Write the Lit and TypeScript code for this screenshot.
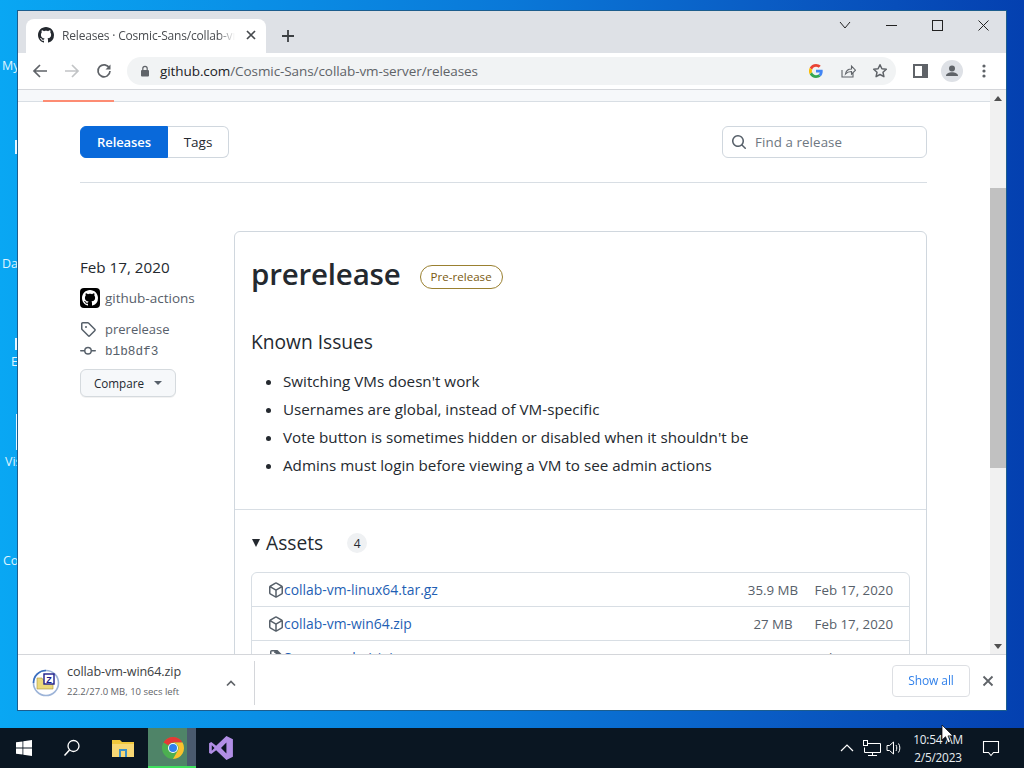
import { LitElement, html, css } from "lit";
import { customElement } from "lit/decorators.js";

const GH = "M8 0C3.58 0 0 3.58 0 8c0 3.54 2.29 6.53 5.47 7.59.4.07.55-.17.55-.38 0-.19-.01-.82-.01-1.49-2.01.37-2.53-.49-2.69-.94-.09-.23-.48-.94-.82-1.13-.28-.15-.68-.52-.01-.53.63-.01 1.08.58 1.23.82.72 1.21 1.87.87 2.33.66.07-.52.28-.87.51-1.07-1.78-.2-3.64-.89-3.64-3.95 0-.87.31-1.59.82-2.15-.08-.2-.36-1.02.08-2.12 0 0 .67-.21 2.2.82.64-.18 1.32-.27 2-.27.68 0 1.36.09 2 .27 1.53-1.04 2.2-.82 2.2-.82.44 1.1.16 1.92.08 2.12.51.56.82 1.27.82 2.15 0 3.07-1.87 3.75-3.65 3.95.29.25.54.73.54 1.48 0 1.07-.01 1.93-.01 2.2 0 .21.15.46.55.38A8.013 8.013 0 0016 8c0-4.42-3.58-8-8-8z";
const TAG = "M2.5 7.775V2.75a.25.25 0 01.25-.25h5.025a.25.25 0 01.177.073l6.25 6.25a.25.25 0 010 .354l-5.025 5.025a.25.25 0 01-.354 0l-6.25-6.25a.25.25 0 01-.073-.177zm-1.5 0V2.75C1 1.784 1.784 1 2.75 1h5.025c.464 0 .91.184 1.238.513l6.25 6.25a1.75 1.75 0 010 2.474l-5.026 5.026a1.75 1.75 0 01-2.474 0l-6.25-6.25A1.75 1.75 0 011 7.775zM6 5a1 1 0 100 2 1 1 0 000-2z";
const COMMIT = "M10.5 7.75a2.5 2.5 0 11-5 0 2.5 2.5 0 015 0zm1.43.75a4.002 4.002 0 01-7.86 0H.75a.75.75 0 110-1.5h3.32a4.001 4.001 0 017.86 0h3.32a.75.75 0 110 1.5h-3.32z";
const PKG = "M8.878.392a1.75 1.75 0 00-1.756 0l-5.25 3.045A1.75 1.75 0 001 4.951v6.098c0 .624.332 1.2.872 1.514l5.25 3.045a1.75 1.75 0 001.756 0l5.25-3.045c.54-.313.872-.89.872-1.514V4.951c0-.624-.332-1.2-.872-1.514L8.878.392zM7.875 1.69a.25.25 0 01.25 0l4.63 2.685L8 7.133 3.245 4.375l4.63-2.685zM2.5 5.677v5.372c0 .09.047.171.125.216l4.625 2.683V8.432L2.5 5.677zm6.25 8.271l4.625-2.683a.25.25 0 00.125-.216V5.677L8.75 8.432v5.516z";
const ZIPF = "M3.5 1.75a.25.25 0 01.25-.25h3a.75.75 0 000 1.5h.5a.25.25 0 01.25.25v.5c0 .41.34.75.75.75h4a.25.25 0 01.25.25v10a.25.25 0 01-.25.25h-8.5a.25.25 0 01-.25-.25V1.75zM3.75 0A1.75 1.75 0 002 1.75v12.5c0 .97.78 1.75 1.75 1.75h8.5A1.75 1.75 0 0014 14.25V4.5L9.5 0H3.75z";
const SEARCH = "M11.5 7a4.499 4.499 0 11-8.998 0A4.499 4.499 0 0111.5 7zm-.82 4.74a6 6 0 111.06-1.06l3.04 3.04a.75.75 0 11-1.06 1.06l-3.04-3.04z";

const oct = (d: string, size: number, cls = "") =>
  html`<svg class=${cls} width=${size} height=${size} viewBox="0 0 16 16" fill="currentColor" aria-hidden="true"><path fill-rule="evenodd" d=${d}></path></svg>`;

const chromeLogo = (size: number) => html`<svg width=${size} height=${size} viewBox="0 0 48 48">
  <circle cx="24" cy="24" r="22" fill="#4caf50"/>
  <path d="M24 2a22 22 0 0 1 19.05 11H24a11 11 0 0 0-9.53 5.5L5 13A22 22 0 0 1 24 2z" fill="#e53935"/>
  <path d="M43.05 13A22 22 0 0 1 24 46l9.53-16.5A11 11 0 0 0 33.53 18.5 11 11 0 0 0 24 13z" fill="#fbc02d"/>
  <circle cx="24" cy="24" r="10" fill="#fff"/><circle cx="24" cy="24" r="8" fill="#2f80ed"/>
</svg>`;

@customElement("app-root")
export class AppRoot extends LitElement {
  static styles = css`
    :host { display: block; width: 1024px; height: 768px; }
    * { box-sizing: border-box; }
    .desk { position: relative; width: 1024px; height: 768px; overflow: hidden; display: flex; flex-direction: column; justify-content: flex-end;
      background: linear-gradient(90deg, #09a7f3 0%, #0a8fe6 25%, #0a78d8 50%, #0a5cc4 75%, #0440b0 100%); font-family: "Open Sans", sans-serif; }
    .dicon { position: absolute; left: 2px; color: #dff4ff; font-size: 12.5px; line-height: 14px; white-space: nowrap; }
    .dbar { position: absolute; left: 15px; width: 3px; background: #e8f6ff; }

    .win { position: absolute; left: 17px; top: 10px; width: 990px; height: 701px; border: 1px solid #1c5d8e; background: #fff; display: flex; flex-direction: column; overflow: hidden; }
    .tabstrip { height: 42px; flex: none; background: #dee1e6; display: flex; align-items: flex-end; padding-left: 8px; position: relative; }
    .tab { width: 240px; height: 34px; background: #fff; border-radius: 8px 8px 0 0; display: flex; align-items: center; padding: 0 7px 2px 12px; gap: 8px; }
    .tab .title { font-size: 12px; color: #4a4d51; white-space: nowrap; overflow: hidden; flex: 1; letter-spacing: -.18px; -webkit-mask-image: linear-gradient(90deg, #000 90%, transparent); mask-image: linear-gradient(90deg, #000 90%, transparent); }
    .newtab { margin: 0 0 9px 14px; width: 16px; height: 16px; color: #3c4043; display: flex; }
    .wctl { position: absolute; right: 0; top: 0; height: 28px; display: flex; align-items: center; color: #222; }
    .wctl span { width: 46px; display: flex; justify-content: center; }

    .toolbar { height: 37px; flex: none; background: #fff; border-bottom: 1px solid #d4d6da; display: flex; align-items: center; }
    .nav { width: 32px; display: flex; justify-content: center; color: #5f6368; }
    .nav.first { margin-left: 6px; }
    .omni { margin-left: 7px; width: 769px; height: 28px; background: #f1f3f4; border-radius: 14px; display: flex; align-items: center; padding: 0 0 0 12px; }
    .url { margin-left: 9px; font-size: 13.5px; color: #5f6368; white-space: nowrap; letter-spacing: -.08px; flex: 1; }
    .url b { font-weight: 400; color: #202124; }
    .omni-ic { width: 32px; display: flex; justify-content: center; color: #5f6368; }
    .tb-r { display: flex; align-items: center; color: #5f6368; }
    .tb-r .a { width: 32px; display: flex; justify-content: center; }

    .content { flex: 1; min-height: 0; display: flex; position: relative; }
    .page { flex: 1; min-width: 0; overflow: hidden; background: #fff; }
    .ghnav { height: 12px; background: #f6f8fa; border-bottom: 1px solid #d8dee4; padding-left: 25px; display: flex; align-items: flex-end; }
    .ghnav i { display: block; width: 71px; height: 2px; margin-bottom: -1px; background: #fd8c73; }
    .inner { padding: 24px 63px 0 62px; color: #24292f; }
    .head { display: flex; justify-content: space-between; padding-bottom: 24px; border-bottom: 1px solid #d8dee4; }
    .seg { display: flex; height: 32px; font-size: 13.5px; }
    .seg a { display: flex; align-items: center; justify-content: center; font-weight: 600; border: 1px solid #d0d7de; }
    .seg .on { width: 88px; background: #0969da; border-color: #0969da; color: #fff; border-radius: 6px 0 0 6px; font-size: 13px; letter-spacing: -.1px; }
    .seg .off { width: 61px; border-left: 0; color: #24292f; border-radius: 0 6px 6px 0; font-weight: 500; }
    .find { width: 205px; height: 32px; border: 1px solid #d0d7de; border-radius: 6px; display: flex; align-items: center; gap: 8px; padding-left: 8px; color: #57606a; font-size: 13.3px; }
    .find span { color: #6e7781; letter-spacing: .1px; }

    .rel { display: flex; padding-top: 48px; }
    .side { width: 154px; flex: none; display: flex; flex-direction: column; align-items: flex-start; color: #57606a; font-size: 13.5px; }
    .date { font-size: 15.2px; color: #24292f; line-height: 20px; margin-top: 26px; }
    .who { display: flex; align-items: center; gap: 5px; margin-top: 11px; height: 20px; color: #57606a; }
    .avatar { width: 20px; height: 20px; background: #000; border-radius: 4px; color: #fff; display: flex; align-items: center; justify-content: center; }
    .meta { display: flex; align-items: center; gap: 9px; height: 20px; font-size: 13px; }
    .meta.t { margin-top: 11px; }
    .meta.c { margin-top: 2px; font-family: "Liberation Mono", monospace; font-size: 12.7px; }
    .compare { margin-top: 8px; width: 96px; height: 28px; border: 1px solid #d5dade; border-radius: 6px; background: #f6f8fa; box-shadow: 0 1px 0 rgba(27,31,36,.06); display: flex; align-items: center; justify-content: center; gap: 10px; font-size: 11.7px; font-weight: 500; color: #24292f; }
    .caret { width: 0; height: 0; border: 4px solid transparent; border-top-color: #57606a; border-bottom: 0; }

    .box { flex: 1; min-width: 0; border: 1px solid #d0d7de; border-radius: 6px 6px 0 0; height: 440px; }
    .body { padding: 15px 16px 0 16px; height: 278px; border-bottom: 1px solid #d8dee4; }
    .titlerow { display: flex; align-items: center; gap: 20px; height: 54px; }
    h1 { margin: 0; font-size: 29.5px; font-weight: 600; color: #24292f; line-height: 54px; letter-spacing: -.2px; }
    .pill { height: 24px; border: 1px solid #9a8030; border-radius: 12px; padding: 0 10px; display: flex; align-items: center; font-size: 11.6px; font-weight: 500; color: #7a5a10; margin-top: 5px; margin-left: -1px; }
    h2 { margin: 26px 0 0; font-size: 19.2px; font-weight: 500; line-height: 30px; color: #24292f; }
    ul { margin: 10px 0 0; padding-left: 32px; font-size: 15.2px; line-height: 28px; color: #24292f; }
    .assets { padding: 16px 16px 0; }
    .ahead { display: flex; align-items: center; height: 32px; }
    .tri { width: 0; height: 0; border: 4px solid transparent; border-top: 8px solid #24292f; border-bottom: 0; margin: 2px 6px 0 1px; }
    .ahead b { font-size: 19.2px; font-weight: 500; color: #24292f; }
    .count { margin-left: 24px; width: 20px; height: 20px; border-radius: 50%; background: #eff1f3; font-size: 12px; display: flex; align-items: center; justify-content: center; margin-top: 2px; }
    .tbl { margin-top: 14px; border: 1px solid #d8dee4; border-radius: 6px 6px 0 0; font-size: 13.3px; }
    .row { height: 34px; display: flex; align-items: center; padding: 0 16px; border-top: 1px solid #d8dee4; color: #57606a; }
    .row:first-child { border-top: 0; height: 33px; }
    .row svg { flex: none; }
    .row a { color: #1f5fb4; font-size: 13.9px; font-weight: 500; flex: 1; }
    .row .sz { width: 52px; text-align: center; white-space: nowrap; }
    .row .dt { width: 94px; text-align: right; }

    .sb { width: 16px; flex: none; background: #f1f1f1; display: flex; flex-direction: column; align-items: center; position: relative; }
    .sb .up, .sb .dn { position: absolute; left: 4px; width: 0; height: 0; border: 4px solid transparent; }
    .sb .up { top: 6px; border-bottom: 5px solid #505050; border-top: 0; }
    .sb .dn { bottom: 5px; border-top: 5px solid #505050; border-bottom: 0; }
    .sb .thumb { position: absolute; top: 98px; left: 0; width: 16px; height: 280px; background: #c1c1c1; }

    .dl { height: 56px; flex: none; background: #fff; border-top: 1px solid #d4d6da; display: flex; align-items: center; position: relative; }
    .dlicon { margin-left: 14px; width: 28px; height: 28px; }
    .dltext { margin-left: 7px; width: 150px; display: flex; flex-direction: column; color: #3c4043; }
    .dltext .n { font-size: 12.6px; line-height: 16px; letter-spacing: -.1px; margin-bottom: 5px; margin-top: -4px; }
    .dltext .s { font-size: 9.5px; line-height: 13px; color: #5f6368; }
    .chev { color: #5f6368; margin-left: 8px; display: flex; }
    .vsep { margin-left: 17px; width: 1px; height: 44px; background: #d4d6da; }
    .showall { margin-left: auto; margin-bottom: 4px; width: 78px; height: 32px; border: 1px solid #dadce0; border-radius: 4px; color: #1a73e8; opacity: .9; font-size: 12px; display: flex; align-items: center; justify-content: center; letter-spacing: -.1px; }
    .dlx { width: 36px; margin-bottom: 4px; display: flex; justify-content: center; color: #5f6368; }

    .task { height: 40px; background: #0a1622; display: flex; align-items: center; color: #fff; position: relative; flex: none; }
    .tk { height: 40px; width: 48px; display: flex; align-items: center; justify-content: center; position: relative; }
    .tk.active { background: #4f8468; margin-left: 1px; padding-left: 2px; }
    .tk.active::before { content: ""; position: absolute; right: 0; top: 0; width: 9px; height: 40px; background: #4a5a6e; }
    .tk.active::after { content: ""; position: absolute; left: 0; right: 0; bottom: 0; height: 2px; background: #3ee05e; }
    .tk svg { position: relative; z-index: 1; }
    .tray { margin-left: auto; display: flex; align-items: center; height: 40px; }
    .clock { width: 63px; font-size: 11.8px; text-align: center; line-height: 18px; color: #e8eef2; letter-spacing: -.2px; margin-right: 6px; }
    .cursor { position: absolute; left: 941px; top: 724px; }
  `;

  render() {
    return html`<div class="desk">
      <span class="dicon" style="top:59px">My</span>
      <span class="dicon" style="top:257px">Da</span>
      <span class="dicon" style="top:355px;left:11px">E</span>
      <span class="dicon" style="top:455px;left:5px">Vis</span>
      <span class="dicon" style="top:554px;left:3px">Co</span>
      <span class="dbar" style="top:140px;height:14px"></span>
      <span class="dbar" style="top:338px;height:12px"></span>
      <span class="dbar" style="top:414px;height:36px;left:16px;width:2px"></span>

      <div class="win">
        <div class="tabstrip">
          <div class="tab">
            <svg width="16" height="16" viewBox="0 0 16 16" fill="#24292f" style="flex:none"><path fill-rule="evenodd" d=${GH}></path></svg>
            <span class="title">Releases · Cosmic-Sans/collab-vm-server</span>
            <svg width="16" height="16" viewBox="0 0 16 16" style="flex:none"><path d="M4 4l8 8M12 4l-8 8" stroke="#45494d" stroke-width="1.7" fill="none"/></svg>
          </div>
          <span class="newtab"><svg width="16" height="16" viewBox="0 0 16 16"><path d="M8 2v12M2 8h12" stroke="currentColor" stroke-width="1.8"/></svg></span>
          <div class="wctl">
            <span><svg width="12" height="8" viewBox="0 0 12 8"><path d="M1 1l5 6 5-6" stroke="#222" fill="none"/></svg></span>
            <span><svg width="11" height="11" viewBox="0 0 11 11"><path d="M0 5.500h11" stroke="#222"/></svg></span>
            <span><svg width="11" height="11" viewBox="0 0 11 11"><rect x=".5" y=".5" width="10" height="10" fill="none" stroke="#222"/></svg></span>
            <span><svg width="11" height="11" viewBox="0 0 11 11"><path d="M.5.5l10 10M10.500.5l-10 10" stroke="#222" fill="none"/></svg></span>
          </div>
        </div>
        <div class="toolbar">
          <span class="nav first"><svg width="16" height="16" viewBox="0 0 16 16"><path d="M15 8H2M8 2L2 8l6 6" stroke="#5f6368" stroke-width="1.7" fill="none"/></svg></span>
          <span class="nav"><svg width="16" height="16" viewBox="0 0 16 16"><path d="M1 8h13M8 2l6 6-6 6" stroke="#c2c4c6" stroke-width="1.7" fill="none"/></svg></span>
          <span class="nav"><svg width="16" height="16" viewBox="0 0 16 16"><path d="M13.400 5.200A6 6 0 1 0 14 8" stroke="#5f6368" stroke-width="1.7" fill="none"/><path d="M14.500 1.500v5h-5z" fill="#5f6368"/></svg></span>
          <div class="omni">
            <svg width="12" height="12" viewBox="0 0 12 12" style="flex:none"><rect x="2" y="5" width="8" height="6.500" rx="1" fill="#5f6368"/><path d="M3.800 5.500V3.600a2.200 2.200 0 0 1 4.400 0v1.900" stroke="#5f6368" stroke-width="1.2" fill="none"/></svg>
            <span class="url"><b>github.com</b>/Cosmic-Sans/collab-vm-server/releases</span>
            <span class="omni-ic"><svg width="14" height="14" viewBox="0 0 48 48"><path fill="#ea4335" d="M24 9.500c3.500 0 6.700 1.200 9.200 3.600l6.900-6.900C35.900 2.400 30.500 0 24 0 14.600 0 6.500 5.400 2.600 13.200l8 6.200C12.500 13.700 17.800 9.500 24 9.500z"/><path fill="#4285f4" d="M47 24.500c0-1.600-.2-3.100-.4-4.500H24v9h13c-.6 3-2.300 5.500-4.800 7.200l7.700 6C44.300 38 47 31.800 47 24.500z"/><path fill="#fbbc05" d="M10.500 28.600A14.500 14.500 0 0 1 10.500 19.400l-8-6.200a24 24 0 0 0 0 21.600z"/><path fill="#34a853" d="M24 48c6.500 0 11.900-2.100 15.900-5.800l-7.700-6c-2.200 1.500-4.900 2.300-8.200 2.300-6.200 0-11.500-4.200-13.400-9.900l-8 6.200C6.500 42.600 14.600 48 24 48z"/></svg></span>
            <span class="omni-ic"><svg width="16" height="16" viewBox="0 0 16 16"><path d="M2 7v7h11v-4M5.500 11c.5-3 3-5 6-5V3l4 4.200-4 4V8.500c-2.500 0-4.500.8-6 2.500z" stroke="#5f6368" stroke-width="1.1" fill="none"/></svg></span>
            <span class="omni-ic"><svg width="16" height="16" viewBox="0 0 16 16"><path d="M8 1.800l1.900 4 4.400.5-3.300 3 .9 4.400L8 11.500l-3.900 2.200.9-4.400-3.300-3 4.400-.5z" stroke="#5f6368" stroke-width="1.500" fill="none" stroke-linejoin="round"/></svg></span>
          </div>
          <div class="tb-r">
            <span class="a" style="margin-left:8px"><svg width="15" height="14" viewBox="0 0 15 14"><path d="M1 1h13v12H1z" fill="none" stroke="#5f6368" stroke-width="2"/><rect x="9" y="1" width="5" height="12" fill="#5f6368"/></svg></span>
            <span class="a"><svg width="22" height="22" viewBox="0 0 22 22"><circle cx="11" cy="11" r="11" fill="#dee1e6"/><circle cx="11" cy="8.500" r="3" fill="#5f6368"/><path d="M5 16c0-2.500 3-3.700 6-3.700s6 1.200 6 3.700z" fill="#5f6368"/></svg></span>
            <span class="a"><svg width="4" height="14" viewBox="0 0 4 14"><circle cx="2" cy="2" r="1.600" fill="#5f6368"/><circle cx="2" cy="7" r="1.600" fill="#5f6368"/><circle cx="2" cy="12" r="1.600" fill="#5f6368"/></svg></span>
          </div>
        </div>
        <div class="content">
          <div class="page">
            <div class="ghnav"><i></i></div>
            <div class="inner">
              <div class="head">
                <div class="seg"><a class="on">Releases</a><a class="off">Tags</a></div>
                <div class="find">${oct(SEARCH, 16)}<span>Find a release</span></div>
              </div>
              <div class="rel">
                <div class="side">
                  <div class="date">Feb 17, 2020</div>
                  <div class="who"><span class="avatar"><svg width="16" height="16" viewBox="0 0 16 16" fill="#fff"><path fill-rule="evenodd" d=${GH}></path></svg></span><span>github-actions</span></div>
                  <div class="meta t">${oct(TAG, 16)}<span>prerelease</span></div>
                  <div class="meta c">${oct(COMMIT, 16)}<span>b1b8df3</span></div>
                  <div class="compare"><span>Compare</span><i class="caret"></i></div>
                </div>
                <div class="box">
                  <div class="body">
                    <div class="titlerow"><h1>prerelease</h1><span class="pill">Pre-release</span></div>
                    <h2>Known Issues</h2>
                    <ul>
                      <li>Switching VMs doesn't work</li>
                      <li>Usernames are global, instead of VM-specific</li>
                      <li>Vote button is sometimes hidden or disabled when it shouldn't be</li>
                      <li>Admins must login before viewing a VM to see admin actions</li>
                    </ul>
                  </div>
                  <div class="assets">
                    <div class="ahead"><i class="tri"></i><b>Assets</b><span class="count">4</span></div>
                    <div class="tbl">
                      <div class="row">${oct(PKG, 16)}<a>collab-vm-linux64.tar.gz</a><span class="sz">35.9 MB</span><span class="dt">Feb 17, 2020</span></div>
                      <div class="row">${oct(PKG, 16)}<a>collab-vm-win64.zip</a><span class="sz">27 MB</span><span class="dt">Feb 17, 2020</span></div>
                      <div class="row">${oct(ZIPF, 16)}<a>Source code (zip)</a><span class="sz"></span><span class="dt">Feb 17, 2020</span></div>
                    </div>
                  </div>
                </div>
              </div>
            </div>
          </div>
          <div class="sb"><i class="up"></i><i class="thumb"></i><i class="dn"></i></div>
        </div>
        <div class="dl">
          <svg class="dlicon" viewBox="0 0 28 28">
            <circle cx="14" cy="14" r="12.500" fill="#fff" stroke="#9db4d8" stroke-width="1.600"/>
            <path d="M1.500 14A12.500 12.500 0 0 1 14 1.500" fill="none" stroke="#3a6fc0" stroke-width="1.600"/>
            <path d="M5 9h5l1 2h10v9H5z" fill="#ecd97a" stroke="#a8963f" stroke-width=".6"/>
            <rect x="12" y="5" width="10" height="10" fill="#fff" stroke="#1c1c8a" stroke-width="1.400"/>
            <text x="17" y="13.500" text-anchor="middle" font-family="Liberation Sans" font-size="9" font-weight="700" fill="#1c1c8a">Z</text>
          </svg>
          <div class="dltext"><span class="n">collab-vm-win64.zip</span><span class="s">22.2/27.0 MB, 10 secs left</span></div>
          <span class="chev"><svg width="12" height="8" viewBox="0 0 12 8"><path d="M2 6.500l4-4 4 4" stroke="#5f6368" stroke-width="1.700" fill="none"/></svg></span>
          <i class="vsep"></i>
          <span class="showall">Show all</span>
          <span class="dlx"><svg width="12" height="12" viewBox="0 0 12 12"><path d="M1.500 1.500l9 9M10.500 1.500l-9 9" stroke="#5f6368" stroke-width="1.800"/></svg></span>
        </div>
      </div>

      <div class="task">
        <span class="tk"><svg width="16" height="16" viewBox="0 0 16 16" fill="#fff"><path d="M0 2.300l6.500-.9v6.200H0zM7.300 1.300L16 0v7.600H7.300zM0 8.400h6.500v6.200L0 13.700zM7.300 8.400H16V16l-8.700-1.200z"/></svg></span>
        <span class="tk"><svg width="18" height="18" viewBox="0 0 18 18"><circle cx="10.500" cy="7" r="5.500" stroke="#fff" stroke-width="1.300" fill="none"/><path d="M6.500 11L1.500 16.500" stroke="#fff" stroke-width="1.500"/></svg></span>
        <span class="tk" style="margin-left:3px"><svg width="22" height="18" viewBox="0 0 22 18"><path d="M0 1h8l2 2h12v15H0z" fill="#f0c73c"/><path d="M0 5h22v13H0z" fill="#f7d774"/><rect x="7" y="10" width="8" height="8" fill="#3c8fc4"/><rect x="9" y="12" width="4" height="6" fill="#f7d774"/></svg></span>
        <span class="tk active">${chromeLogo(24)}</span>
        <span class="tk" style="margin-left:1px"><svg width="26" height="26" viewBox="0 0 24 24"><path d="M17 1l6 3v16l-6 3L7.500 14 3 17.500 1 16.500v-9l2-1L7.500 10zM17 7l-5 5 5 5zM3.500 9.500v5L6 12z" fill="#b18ee6" fill-rule="evenodd"/></svg></span>
        <div class="tray">
          <svg width="14" height="8" viewBox="0 0 14 8" style="margin-right:9px"><path d="M1 7l6-6 6 6" stroke="#fff" stroke-width="1.200" fill="none"/></svg>
          <svg width="18" height="16" viewBox="0 0 18 16" style="margin-right:5px"><path d="M4.500 3.500H17.500V12.500H1.500V7.500M9.500 12.500v2.500M5 15.500h9" stroke="#fff" fill="none"/><rect x=".5" y=".5" width="4" height="5" fill="#0a1622" stroke="#fff"/></svg>
          <svg width="16" height="14" viewBox="0 0 16 14" style="margin-right:5px"><path d="M1 4.500h2.500L7.500 1v12l-4-3.500H1zM10 4c1 1.500 1 4.500 0 6M12.500 2.500c1.800 2.500 1.800 6.500 0 9" stroke="#fff" fill="none"/></svg>
          <div class="clock">10:54 AM<br/>2/5/2023</div>
          <svg width="18" height="17" viewBox="0 0 18 17" style="margin:0 24px 0 6.500px"><path d="M1.500 1.500h15v11h-5l-2.500 3-2.500-3h-5z" fill="none" stroke="#fff" stroke-width="1.100"/></svg>
        </div>
      </div>
      <svg class="cursor" width="13" height="20" viewBox="0 0 13 20"><path d="M1 1v15l3.500-3.300 2.500 6 2.500-1-2.500-5.800h5z" fill="#fff" stroke="#000" stroke-width=".7"/></svg>
    </div>`;
  }
}
